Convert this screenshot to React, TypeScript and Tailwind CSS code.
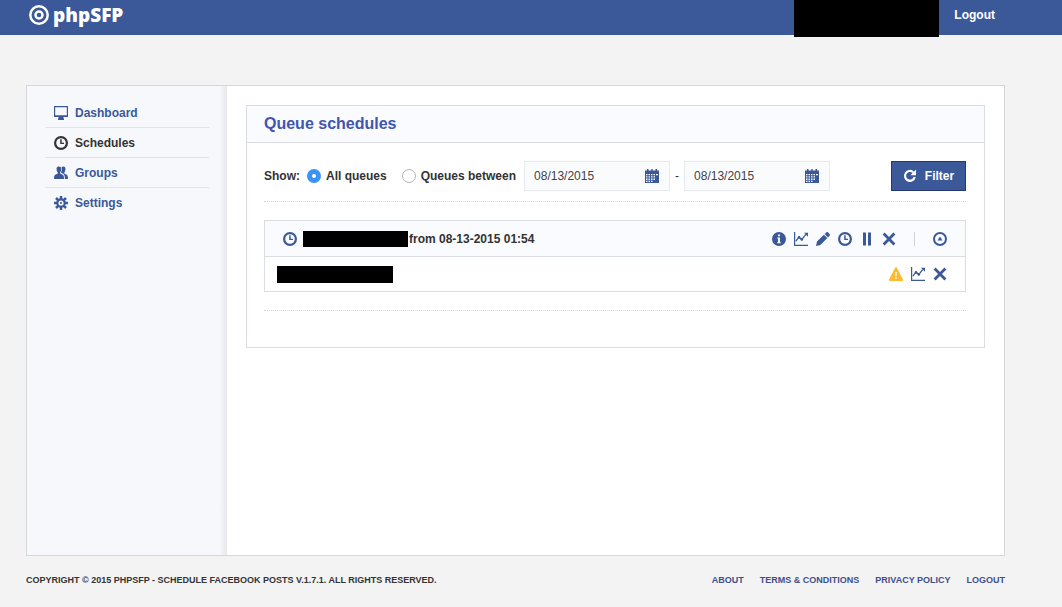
import { useState, type ReactNode } from "react";

function Icon({ children, className = "" }: { children: ReactNode; className?: string }) {
  return (
    <svg viewBox="0 0 14 14" aria-hidden="true" fill="currentColor" className={`block size-3.5 shrink-0 ${className}`}>
      {children}
    </svg>
  );
}

const MonitorIcon = () => (
  <Icon>
    <path fillRule="evenodd" d="M0 0h14v11H9.500v1.500h.5V14H4v-1.500h.5V11H0zM1.200 1.200v8h11.600v-8z" />
  </Icon>
);

const ClockIcon = () => (
  <Icon>
    <circle cx="7" cy="7" r="5.900" fill="none" stroke="currentColor" strokeWidth="2.200" />
    <path d="M6.200 3.200h1.500v3.500H10v1.400H6.200z" />
  </Icon>
);

const GroupsIcon = () => (
  <Icon>
    <path d="M4.900.5C3 .5 2.400 1.800 2.600 3.600c.1 1.300.6 2.300 1.200 2.900v1L1.300 8.700C.4 9.200 0 10 0 13h10c0-3-.4-3.800-1.300-4.300L6.100 7.500v-1c.6-.6 1-1.600 1.100-2.900C7.400 1.800 6.800.5 4.900.5z" />
    <path d="M9.400.5C8.600.5 8 .8 7.600 1.300c.5 1.700.3 3.600-.6 5l.2.500 2 1c1.300.7 1.600 1.900 1.700 5.200H14c0-3-.4-3.800-1.300-4.300l-2.400-1.200v-1c.6-.6 1-1.600 1.100-2.900.2-1.800-.4-3.100-2-3.100z" />
  </Icon>
);

const GearIcon = () => (
  <Icon>
    <path d="M7 0v3M7 11v3M0 7h3M11 7h3M2 2l2.200 2.200M9.800 9.800L12 12M2 12l2.200-2.200M9.800 4.200L12 2" stroke="currentColor" strokeWidth="2.500" />
    <circle cx="7" cy="7" r="3.700" fill="none" stroke="currentColor" strokeWidth="2.200" />
    <circle cx="7" cy="7" r="1.100" />
  </Icon>
);

const CalendarIcon = () => (
  <Icon>
    <path fillRule="evenodd" d="M2 0h1.500v1.500h2.800V0h1.400v1.500h2.800V0H12v1.500h2V14H0V1.500h2zM1 5v1.300h1.500V5zM3.500 5v1.300H5V5zM6 5v1.300h1.500V5zM8.500 5v1.300H10V5zM11 5v1.300h2V5zM1 7.300v1.300h1.500V7.300zM3.500 7.300v1.300H5V7.300zM6 7.300v1.300h1.500V7.300zM8.500 7.300v1.300H10V7.300zM1 9.600v1.300h1.500V9.600zM3.500 9.600v1.300H5V9.600zM6 9.600v1.300h1.500V9.600zM8.500 9.600v1.300H10V9.600zM1 11.800V13h1.500v-1.200zM3.500 11.800V13H5v-1.200zM6 11.800V13h1.500v-1.200z" />
  </Icon>
);

const RefreshIcon = () => (
  <Icon>
    <path d="M10.200 3.200A4.900 4.900 0 1 0 11.700 8" fill="none" stroke="currentColor" strokeWidth="2.200" />
    <path d="M13 .6v5.600H7.400z" />
  </Icon>
);

const InfoIcon = () => (
  <Icon>
    <path fillRule="evenodd" d="M7 0a7 7 0 1 1 0 14A7 7 0 0 1 7 0zM6 2.600v1.700h2V2.600zM5.200 5.600v1H6v3.600h-.8v1h3.600v-1H8V5.600z" />
  </Icon>
);

const ChartIcon = () => (
  <Icon>
    <path d="M0 0h1.200v12.800H14V14H0z" />
    <path d="M1.800 9.200l3.200-4 2.800 2.400 4-5.200" fill="none" stroke="currentColor" strokeWidth="1.300" />
    <path d="M10 .8h4v4z" />
    <circle cx="5" cy="5.400" r="1.300" />
    <circle cx="7.800" cy="7.400" r="1.300" />
  </Icon>
);

const PencilIcon = () => (
  <Icon>
    <path d="M0 14l1-4.400 6.900-6.900 3.400 3.400L4.400 13zM8.600 2L10.300.4c.5-.5 1.300-.5 1.800 0l1.500 1.500c.5.500.5 1.300 0 1.800L12 5.400z" />
  </Icon>
);

const PauseIcon = () => (
  <Icon>
    <path d="M3 .5h3v13H3zM8 .5h3v13H8z" />
  </Icon>
);

const CrossIcon = () => (
  <Icon>
    <path d="M1.600 1.600l10.800 10.800M12.400 1.600L1.600 12.400" stroke="currentColor" strokeWidth="2.800" />
  </Icon>
);

const CollapseIcon = () => (
  <Icon>
    <circle cx="7" cy="7" r="6" fill="none" stroke="currentColor" strokeWidth="2" />
    <path d="M7 4.500L9.500 8.500h-5z" />
  </Icon>
);

const WarningIcon = () => (
  <Icon className="text-[#fbbc33]">
    <path fillRule="evenodd" d="M6.400.3h1.200L14 12.400V14H0v-1.600zM6.200 5l.3 4.200h1L7.800 5zM6.200 10.200v1.600h1.600v-1.600z" />
  </Icon>
);

const menu = [
  { label: "Dashboard", icon: <MonitorIcon /> },
  { label: "Schedules", icon: <ClockIcon />, active: true },
  { label: "Groups", icon: <GroupsIcon /> },
  { label: "Settings", icon: <GearIcon /> },
];

const footerLinks = ["About", "Terms & Conditions", "Privacy Policy", "Logout"];

function ActionButton({ label, children }: { label: string; children: ReactNode }) {
  return (
    <button type="button" aria-label={label} className="cursor-pointer text-[#3b5998]">
      {children}
    </button>
  );
}

function Radio({ label, checked, onChange }: { label: string; checked: boolean; onChange: () => void }) {
  return (
    <label className="flex items-center gap-[5px] font-bold">
      <input
        type="radio"
        name="range"
        checked={checked}
        onChange={onChange}
        className="size-3.5 appearance-none rounded-full border border-[#b4b4b4] bg-white checked:border-[5px] checked:border-[#3b93f7]"
      />
      {label}
    </label>
  );
}

function DateField({ label }: { label: string }) {
  return (
    <div className="flex h-[30px] w-[146px] items-center border border-[#e6eaf0] bg-[#fafbfd] pr-2.5 pl-[9px]">
      <input type="text" aria-label={label} defaultValue="08/13/2015" className="min-w-0 flex-1 bg-transparent text-[#444] outline-none" />
      <ActionButton label={`Pick ${label.toLowerCase()}`}>
        <CalendarIcon />
      </ActionButton>
    </div>
  );
}

export default function App() {
  const [range, setRange] = useState("all");

  return (
    <div className="flex min-h-screen flex-col bg-[#f3f3f3] font-['Liberation_Sans',Arial,sans-serif] text-xs text-[#333]">
      <header className="flex h-[35px] items-start justify-between bg-[#3b5998] pr-[52px] pl-[29px] text-white">
        <a href="#" className="flex h-[30px] items-center gap-1">
          <svg viewBox="0 0 20 20" aria-hidden="true" className="size-5" fill="none" stroke="currentColor">
            <circle cx="10" cy="10" r="8.700" strokeWidth="2.500" />
            <circle cx="10" cy="10" r="3.500" strokeWidth="2.500" />
          </svg>
          <span className="font-['Open_Sans',sans-serif] text-[19px] leading-5 font-extrabold">phpSFP</span>
        </a>
        <nav aria-label="Account" className="flex items-start">
          <div className="h-[37px] w-[145px] bg-black" />
          <a href="#" className="px-[15px] text-xs leading-[30px] font-bold">Logout</a>
        </nav>
      </header>

      <div className="mt-[50px] mr-[57px] ml-[26px] flex flex-1 border border-[#d5d7da] bg-white">
        <aside className="w-[200px] shrink-0 bg-[#f6f8fc] bg-linear-to-l from-[#e6e8ec] to-[#f6f8fc] to-[8px] px-[18px] pt-3">
          <nav aria-label="Main">
            <ul className="divide-y divide-[#e0e6ed]">
              {menu.map((item) => (
                <li key={item.label}>
                  <a
                    href="#"
                    aria-current={item.active ? "page" : undefined}
                    className={`flex h-[29px] items-center gap-[7px] px-[9px] font-bold ${item.active ? "text-[#333]" : "text-[#3b5998]"}`}
                  >
                    {item.icon}
                    {item.label}
                  </a>
                </li>
              ))}
            </ul>
          </nav>
        </aside>

        <main className="min-w-0 flex-1 p-[19px]">
          <section className="border border-[#d9dce1] pb-9">
            <h1 className="border-b border-[#d9dce1] bg-[#fafbfe] px-[17px] text-base leading-9 font-bold text-[#4255b0]">
              Queue schedules
            </h1>
            <div className="pt-[18px] pr-[18px] pl-[17px]">
              <form
                onSubmit={(event) => event.preventDefault()}
                className="flex items-center justify-between border-b border-dotted border-[#d5d5d5] pb-2.5"
              >
                <div className="flex items-center">
                  <span className="mr-[7px] font-bold">Show:</span>
                  <Radio label="All queues" checked={range === "all"} onChange={() => setRange("all")} />
                  <div className="ml-[15px] flex items-center gap-2">
                    <Radio label="Queues between" checked={range === "between"} onChange={() => setRange("between")} />
                    <div className="flex items-center gap-[5px]">
                      <DateField label="Start date" />
                      <span>-</span>
                      <DateField label="End date" />
                    </div>
                  </div>
                </div>
                <button
                  type="submit"
                  className="flex h-[30px] w-[75px] cursor-pointer items-center justify-center gap-2 border border-[#25396e] bg-[#3b5998] font-bold text-white"
                >
                  <RefreshIcon />
                  Filter
                </button>
              </form>

              <ul className="mt-[18px] border border-[#d9dce1]">
                <li className="flex h-9 items-center justify-between border-b border-[#d9dce1] bg-[#fafbfe] px-[18px]">
                  <div className="flex items-center font-bold">
                    <span className="text-[#3b5998]"><ClockIcon /></span>
                    <span className="mr-px ml-1.5 h-4 w-[105px] bg-black" />
                    from 08-13-2015 01:54
                  </div>
                  <div className="flex items-center gap-2">
                    <ActionButton label="Details"><InfoIcon /></ActionButton>
                    <ActionButton label="Statistics"><ChartIcon /></ActionButton>
                    <ActionButton label="Edit"><PencilIcon /></ActionButton>
                    <ActionButton label="Reschedule"><ClockIcon /></ActionButton>
                    <ActionButton label="Pause"><PauseIcon /></ActionButton>
                    <ActionButton label="Delete"><CrossIcon /></ActionButton>
                    <span className="mx-2.5 h-3.5 w-px bg-[#d0d3d8]" />
                    <ActionButton label="Collapse"><CollapseIcon /></ActionButton>
                  </div>
                </li>
                <li className="flex h-[34px] items-center justify-between pr-[18px] pl-3">
                  <span className="h-[17px] w-[116px] bg-black" />
                  <div className="flex items-center gap-2">
                    <ActionButton label="Warning"><WarningIcon /></ActionButton>
                    <ActionButton label="Post statistics"><ChartIcon /></ActionButton>
                    <ActionButton label="Delete post"><CrossIcon /></ActionButton>
                  </div>
                </li>
              </ul>
              <hr className="mt-[18px] border-t border-dotted border-[#d5d5d5]" />
            </div>
          </section>
        </main>
      </div>

      <footer className="mr-[57px] ml-[26px] flex justify-between pt-4 pb-[19px] text-[9px] leading-4 font-bold uppercase">
        <p>Copyright © 2015 phpSFP - Schedule Facebook Posts v.1.7.1. All rights reserved.</p>
        <nav aria-label="Footer" className="flex gap-4 text-[#3f4f8c]">
          {footerLinks.map((label) => (
            <a key={label} href="#">{label}</a>
          ))}
        </nav>
      </footer>
    </div>
  );
}
